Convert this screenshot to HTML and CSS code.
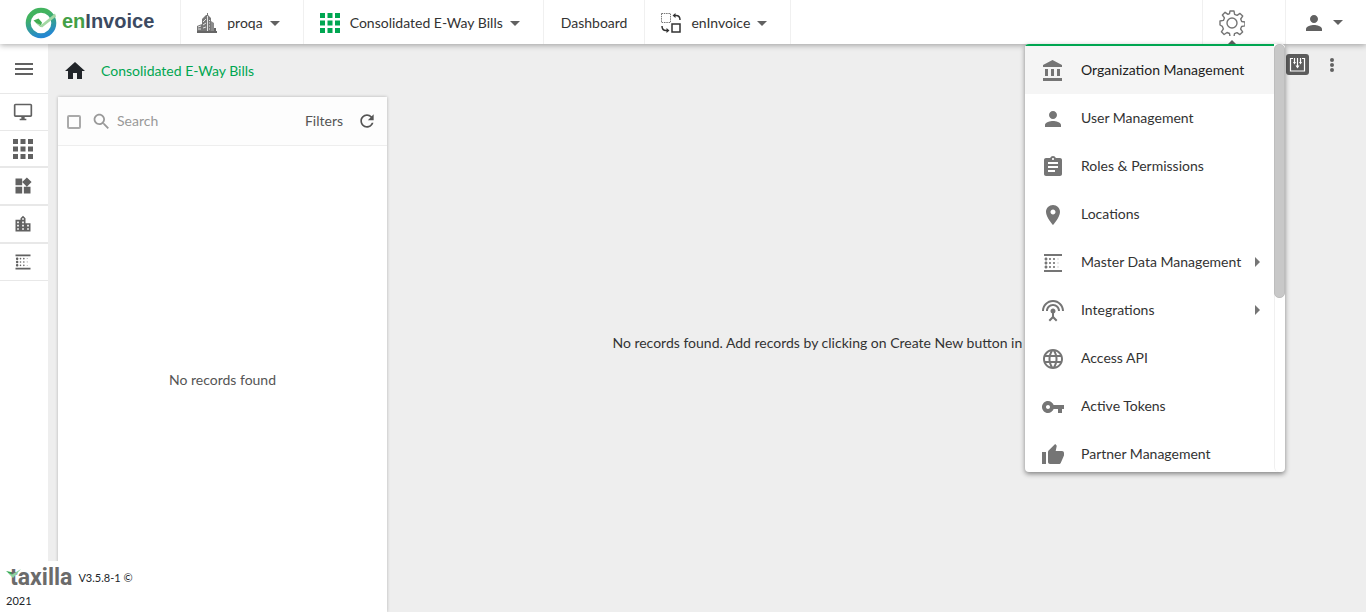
FILE: index.html
```html
<!DOCTYPE html>
<html lang="en">
<head>
<meta charset="utf-8">
<title>enInvoice - Consolidated E-Way Bills</title>
<link rel="stylesheet" href="styles.css">
</head>
<body>
<svg class="defs" aria-hidden="true">
  <symbol id="linear" viewBox="0 0 24 24"><path d="M5 17.500c.83 0 1.500-.67 1.500-1.500s-.67-1.500-1.500-1.500-1.500.67-1.500 1.500.67 1.500 1.500 1.500zM9 13c.55 0 1-.45 1-1s-.45-1-1-1-1 .45-1 1 .45 1 1 1zm0-4c.55 0 1-.45 1-1s-.45-1-1-1-1 .45-1 1 .45 1 1 1zM3 21h18v-2H3v2zM5 9.500c.83 0 1.500-.67 1.500-1.500S5.830 6.500 5 6.500 3.500 7.170 3.500 8 4.170 9.500 5 9.500zm0 4c.83 0 1.500-.67 1.500-1.500s-.67-1.500-1.500-1.500-1.500.67-1.500 1.500.67 1.500 1.500 1.500zM9 17c.55 0 1-.45 1-1s-.45-1-1-1-1 .45-1 1 .45 1 1 1zm8-.5c.28 0 .5-.22.5-.5s-.22-.5-.5-.5-.5.22-.5.5.22.5.5.5zM3 3v2h18V3H3zm14 5.500c.28 0 .5-.22.5-.5s-.22-.5-.5-.5-.5.22-.5.5.22.5.5.5zm0 4c.28 0 .5-.22.5-.5s-.22-.5-.5-.5-.5.22-.5.5.22.5.5.5zM13 9c.55 0 1-.45 1-1s-.45-1-1-1-1 .45-1 1 .45 1 1 1zm0 4c.55 0 1-.45 1-1s-.45-1-1-1-1 .45-1 1 .45 1 1 1zm0 4c.55 0 1-.45 1-1s-.45-1-1-1-1 .45-1 1 .45 1 1 1z"/></symbol>
  <symbol id="person" viewBox="0 0 24 24"><path d="M12 12c2.210 0 4-1.790 4-4s-1.790-4-4-4-4 1.790-4 4 1.790 4 4 4zm0 2c-2.670 0-8 1.340-8 4v2h16v-2c0-2.660-5.330-4-8-4z"/></symbol>
  <symbol id="grid" viewBox="0 0 20 20"><path d="M0 0h5v5H0zM7.500 0h5v5h-5zM15 0h5v5h-5zM0 7.500h5v5H0zM7.500 7.500h5v5h-5zM15 7.500h5v5h-5zM0 15h5v5H0zM7.500 15h5v5h-5zM15 15h5v5h-5z"/></symbol>
</svg>

<header class="topbar">
  <a class="brand" href="#">
    <svg class="brand-mark" viewBox="0 0 32 32" aria-hidden="true">
      <defs><linearGradient id="ring" x1="0.3" y1="0" x2="0.6" y2="1"><stop offset="0.2" stop-color="#42b35f"/><stop offset="1" stop-color="#2487d2"/></linearGradient></defs>
      <circle cx="16" cy="16" r="12.800" fill="none" stroke="url(#ring)" stroke-width="5"/>
      <path d="M8.500 13.500 13.500 11.500 17 15.500 15.500 20z" fill="#41ad52"/>
      <path d="M10 15.500 16 18 30 6.500 31 9.500 17 20.500z" fill="#a3d7a3"/>
    </svg>
    <span class="brand-name"><span class="brand-en">en</span>Invoice</span>
  </a>
  <button class="nav-item" type="button">
    <svg class="icon-20" viewBox="0 0 20 20" aria-hidden="true">
      <path fill="#777" d="M0 13l5-2v8H0zM5 6l4-4h1V0h1v2l3 3v14H5z"/>
      <path fill="#8b8b8b" d="M14 8l3 2v9h-3z"/>
      <path fill="#666" d="M0 18h20v2H0zM17 15h2v3h-2z"/>
      <path stroke="#fff" stroke-width=".8" fill="none" d="M6 9l3-3M6 12l3-2M6 15l3-1M10.500 3v15M12 7l1 1M12 10h1M12 13h1M12 16h1M1 14l3-1M1 16h3"/>
    </svg>
    <span>proqa</span><span class="caret"></span>
  </button>
  <button class="nav-item" type="button">
    <svg class="icon-20 green" aria-hidden="true"><use href="#grid"/></svg>
    <span>Consolidated E-Way Bills</span><span class="caret"></span>
  </button>
  <a class="nav-item nav-link" href="#">Dashboard</a>
  <button class="nav-item switcher" type="button">
    <svg class="icon-20" viewBox="0 0 20 20" aria-hidden="true">
      <path d="M.5.500h9v9h-9z" fill="none" stroke="#777" stroke-dasharray="1.500 .8"/>
      <path d="M11 11h8v8h-8z" fill="none" stroke="#333" stroke-width="1.500"/>
      <path d="M13 2.500h2q4 0 4 4.500M7 17.500H5q-4 0-4-4.500" fill="none" stroke="#333" stroke-width="1.500"/>
      <path d="M11.500 2.500 14.500 0v5zM8.500 17.500 5.500 15v5z" fill="#333"/>
    </svg>
    <span>enInvoice</span><span class="caret"></span>
  </button>
  <div class="nav-end">
    <div class="settings">
      <button class="gear" type="button" aria-label="Settings" aria-expanded="true">
        <svg viewBox="0 0 26 26" aria-hidden="true"><g fill="none" stroke="#757575" stroke-width="1.400" stroke-linejoin="round"><circle cx="13" cy="13" r="5"/><path d="M11 1h4l.6 3.400 2.500 1 2.900-2 2.700 2.700-2 2.900 1 2.500 3.300.5v3.900l-3.400.6-1 2.500 2 2.900-2.700 2.700-2.900-2-2.500 1-.5 3.300h-3.900l-.6-3.400-2.500-1-2.900 2-2.700-2.700 2-2.900-1-2.500L1 15v-4l3.400-.6 1-2.500-2-2.900L6.100 2.300l2.900 2 1.500-.6z"/></g></svg>
      </button>
      <span class="pointer"></span>
      <nav class="menu" aria-label="Settings">
        <div class="menu-list">
          <a class="menu-item active" href="#"><svg class="icon" viewBox="0 0 24 24"><path d="M4 10v7h3v-7H4zm6 0v7h3v-7h-3zM2 22h19v-3H2v3zm14-12v7h3v-7h-3zm-4.500-9L2 6v2h19V6l-9.500-5z"/></svg>Organization Management</a>
          <a class="menu-item" href="#"><svg class="icon"><use href="#person"/></svg>User Management</a>
          <a class="menu-item" href="#"><svg class="icon" viewBox="0 0 24 24"><path d="M19 3h-4.180C14.400 1.840 13.300 1 12 1c-1.300 0-2.400.84-2.820 2H5c-1.100 0-2 .9-2 2v14c0 1.100.9 2 2 2h14c1.100 0 2-.9 2-2V5c0-1.100-.9-2-2-2zm-7 0c.55 0 1 .45 1 1s-.45 1-1 1-1-.45-1-1 .45-1 1-1zm2 14H7v-2h7v2zm3-4H7v-2h10v2zm0-4H7V7h10v2z"/></svg>Roles &amp; Permissions</a>
          <a class="menu-item" href="#"><svg class="icon" viewBox="0 0 24 24"><path d="M12 2C8.130 2 5 5.130 5 9c0 5.250 7 13 7 13s7-7.750 7-13c0-3.870-3.130-7-7-7zm0 9.500c-1.380 0-2.500-1.120-2.500-2.500s1.120-2.500 2.500-2.500 2.500 1.120 2.500 2.500-1.120 2.500-2.500 2.500z"/></svg>Locations</a>
          <a class="menu-item" href="#"><svg class="icon"><use href="#linear"/></svg>Master Data Management<span class="sub"></span></a>
          <a class="menu-item" href="#"><svg class="icon" viewBox="0 0 24 24"><path d="M12 5c-3.870 0-7 3.130-7 7h2c0-2.760 2.240-5 5-5s5 2.240 5 5h2c0-3.870-3.130-7-7-7zm1 9.290c.88-.39 1.500-1.260 1.500-2.290 0-1.380-1.120-2.500-2.500-2.500S9.500 10.620 9.500 12c0 1.020.62 1.900 1.500 2.290v3.300L7.590 21 9 22.410l3-3 3 3L16.410 21 13 17.590v-3.300zM12 1C5.930 1 1 5.930 1 12h2c0-4.970 4.030-9 9-9s9 4.030 9 9h2c0-6.070-4.930-11-11-11z"/></svg>Integrations<span class="sub"></span></a>
          <a class="menu-item" href="#"><svg class="icon" viewBox="0 0 24 24"><path d="M11.990 2C6.470 2 2 6.480 2 12s4.470 10 9.990 10C17.520 22 22 17.520 22 12S17.520 2 11.990 2zm6.930 6h-2.950c-.32-1.250-.78-2.450-1.380-3.560 1.840.63 3.370 1.910 4.330 3.560zM12 4.040c.83 1.200 1.480 2.530 1.910 3.960h-3.820c.43-1.430 1.080-2.760 1.910-3.960zM4.260 14C4.100 13.360 4 12.690 4 12s.1-1.360.26-2h3.380c-.08.66-.14 1.320-.14 2s.06 1.340.14 2H4.260zm.82 2h2.950c.32 1.250.78 2.450 1.380 3.560-1.840-.63-3.370-1.900-4.330-3.560zm2.950-8H5.080c.96-1.660 2.490-2.930 4.330-3.560C8.810 5.550 8.350 6.750 8.030 8zM12 19.960c-.83-1.200-1.480-2.530-1.910-3.960h3.820c-.43 1.430-1.080 2.760-1.910 3.960zM14.340 14H9.660c-.09-.66-.16-1.320-.16-2s.07-1.350.16-2h4.680c.09.65.16 1.320.16 2s-.07 1.340-.16 2zm.25 5.560c.6-1.110 1.060-2.310 1.380-3.560h2.950c-.96 1.650-2.490 2.930-4.330 3.560zM16.360 14c.08-.66.14-1.320.14-2s-.06-1.340-.14-2h3.380c.16.64.26 1.310.26 2s-.1 1.360-.26 2h-3.380z"/></svg>Access API</a>
          <a class="menu-item" href="#"><svg class="icon" viewBox="0 0 24 24"><path d="M12.650 10C11.830 7.670 9.610 6 7 6c-3.310 0-6 2.690-6 6s2.690 6 6 6c2.610 0 4.830-1.670 5.650-4H17v4h4v-4h2v-4H12.650zM7 14c-1.100 0-2-.9-2-2s.9-2 2-2 2 .9 2 2-.9 2-2 2z"/></svg>Active Tokens</a>
          <a class="menu-item" href="#"><svg class="icon" viewBox="0 0 24 24"><path d="M1 21h4V9H1v12zm22-11c0-1.100-.9-2-2-2h-6.310l.95-4.570.03-.32c0-.41-.17-.79-.44-1.060L14.170 1 7.590 7.590C7.220 7.950 7 8.450 7 9v10c0 1.100.9 2 2 2h9c.83 0 1.540-.5 1.840-1.220l3.020-7.050c.09-.23.14-.47.14-.73v-2z"/></svg>Partner Management</a>
        </div>
        <div class="scroll-track"><div class="scroll-thumb"></div></div>
      </nav>
    </div>
    <button class="account" type="button" aria-label="Account"><svg class="icon"><use href="#person"/></svg><span class="caret"></span></button>
  </div>
</header>

<div class="shell">
  <aside class="rail">
    <button class="rail-item toggle" type="button" aria-label="Menu"><svg class="icon" viewBox="0 0 24 24"><path d="M3 18h18v-2H3v2zm0-5h18v-2H3v2zm0-7v2h18V6H3z"/></svg></button>
    <button class="rail-item" type="button" aria-label="Desktop"><svg class="rail-icon" viewBox="0 0 24 24"><path d="M21 2H3c-1.100 0-2 .9-2 2v12c0 1.100.9 2 2 2h7v2H8v2h8v-2h-2v-2h7c1.100 0 2-.9 2-2V4c0-1.100-.9-2-2-2zm0 14H3V4h18v12z"/></svg></button>
    <button class="rail-item thick" type="button" aria-label="Apps"><svg class="icon-20"><use href="#grid"/></svg></button>
    <button class="rail-item tall" type="button" aria-label="Widgets"><svg class="rail-icon" viewBox="0 0 24 24"><path d="M13 13v8h8v-8h-8zM3 21h8v-8H3v8zM3 3v8h8V3H3zm13.660-1.310L11 7.340 16.660 13l5.660-5.660-5.660-5.650z"/></svg></button>
    <button class="rail-item tall" type="button" aria-label="Organization"><svg class="rail-icon" viewBox="0 0 24 24"><path d="M15 11V5l-3-3-3 3v2H3v14h18V11h-6zm-8 8H5v-2h2v2zm0-4H5v-2h2v2zm0-4H5V9h2v2zm6 8h-2v-2h2v2zm0-4h-2v-2h2v2zm0-4h-2V9h2v2zm0-4h-2V5h2v2zm6 12h-2v-2h2v2zm0-4h-2v-2h2v2z"/></svg></button>
    <button class="rail-item" type="button" aria-label="Master data"><svg class="rail-icon"><use href="#linear"/></svg></button>
  </aside>

  <main class="page">
    <div class="crumbs">
      <a class="home" href="#" aria-label="Home"><svg class="home-icon" viewBox="0 0 24 24"><path d="M10 20v-6h4v6h5v-8h3L12 3 2 12h3v8z"/></svg></a>
      <a class="crumb" href="#">Consolidated E-Way Bills</a>
      <div class="tools">
        <button class="import" type="button" aria-label="Import"><svg viewBox="0 0 23 21"><rect width="23" height="21" rx="3" fill="#5c5c5c"/><path d="M4.500 4v13h14V4M8.500 4v5M11.500 4v9M14.500 4v5M5 4.500h2M16 4.500h2" fill="none" stroke="#fff" stroke-width="1.200"/><path d="M7 8h3l-1.500 2.500zM13 8h3l-1.500 2.500zM9.500 11.500h4l-2 3z" fill="#fff"/></svg></button>
        <button class="more" type="button" aria-label="More"><svg viewBox="0 0 6 16"><circle cx="3" cy="3" r="2"/><circle cx="3" cy="8" r="2"/><circle cx="3" cy="13" r="2"/></svg></button>
      </div>
    </div>
    <div class="content">
      <section class="records">
        <div class="records-head">
          <input class="check" type="checkbox" aria-label="Select all">
          <label class="search"><svg class="search-icon" viewBox="0 0 24 24"><path d="M15.500 14h-.79l-.28-.27C15.410 12.590 16 11.110 16 9.500 16 5.910 13.090 3 9.500 3S3 5.910 3 9.500 5.910 16 9.500 16c1.610 0 3.090-.59 4.230-1.570l.27.28v.79l5 4.990L20.490 19l-4.990-5zm-6 0C7.010 14 5 11.990 5 9.500S7.010 5 9.500 5 14 7.010 14 9.500 11.990 14 9.500 14z"/></svg><input class="search-input" type="text" placeholder="Search" aria-label="Search"></label>
          <button class="filters" type="button">Filters</button>
          <button class="refresh" type="button" aria-label="Refresh"><svg viewBox="0 0 24 24"><path d="M17.650 6.350C16.200 4.900 14.210 4 12 4c-4.420 0-7.990 3.580-7.990 8s3.570 8 7.990 8c3.730 0 6.840-2.550 7.730-6h-2.080c-.82 2.330-3.040 4-5.650 4-3.310 0-6-2.690-6-6s2.690-6 6-6c1.660 0 3.140.69 4.220 1.780L13 11h7V4l-2.350 2.350z"/></svg></button>
        </div>
        <p class="records-empty">No records found</p>
      </section>
      <section class="detail"><p>No records found. Add records by clicking on Create New button in the top right menu</p></section>
    </div>
  </main>

  <footer class="foot">
    <span class="taxilla">taxilla<svg class="leaf" viewBox="0 0 16 10" aria-hidden="true"><path d="M0 2l5 1 1 4z" fill="#2fa84f"/><path d="M2 4l4 1.500L15 0 7 9z" fill="#8fd3a0"/></svg></span>
    <span>V3.5.8-1 ©</span>
    <span class="year">2021</span>
  </footer>
</div>
</body>
</html>
```
FILE: styles.css
```css
* { box-sizing: border-box; }
body {
  margin: 0;
  height: 100vh;
  display: flex;
  flex-direction: column;
  overflow: hidden;
  background: #eee;
  color: #333;
  font: 14px/20px Lato, "Open Sans", sans-serif;
}
button { padding: 0; border: 0; background: none; color: inherit; font: inherit; }
a { color: inherit; text-decoration: none; }
p { margin: 0; }
svg { display: block; flex: none; }
.defs { position: absolute; width: 0; height: 0; }
.icon { width: 24px; height: 24px; fill: #757575; }
.icon-20 { width: 20px; height: 20px; fill: #616161; }
.icon-20.green { fill: #00a651; }
.caret { border: 5px solid transparent; border-top-color: #616161; border-bottom: 0; }

.topbar {
  position: relative;
  z-index: 2;
  display: flex;
  flex: none;
  height: 44px;
  background: #fff;
  box-shadow: 0 1px 6px rgba(0, 0, 0, 0.35);
}
.brand { display: flex; align-items: center; gap: 5px; padding: 2px 26px 0 25px; }
.brand-mark { width: 32px; height: 32px; }
.brand-name { font: bold 20px/24px "Liberation Sans", Arial, sans-serif; color: #3c4a61; padding-bottom: 4px; }
.brand-en { color: #43a047; }
.nav-item {
  display: flex;
  align-items: center;
  gap: 10px;
  padding: 2px 23px 0 16px;
  border-left: 1px solid #f0f0f0;
  white-space: nowrap;
}
.nav-item .caret { margin-left: -3px; }
.nav-link { padding: 2px 17px 0; }
.switcher { border-right: 1px solid #f0f0f0; }
.nav-end { display: flex; margin-left: auto; }
.settings { position: relative; width: 83px; border-left: 1px solid #f0f0f0; }
.gear { display: flex; align-items: center; padding-left: 16px; height: 100%; width: 100%; }
.gear svg { width: 26px; height: 26px; margin-top: 1px; }
.pointer { position: absolute; left: 25px; bottom: 0; border: 4px solid transparent; border-bottom-color: #616161; border-top: 0; }
.account { display: flex; align-items: center; gap: 7px; padding: 1px 23px 0 16px; border-left: 1px solid #f0f0f0; }
.account .icon { fill: #616161; }

.menu {
  position: absolute;
  top: 44px;
  right: 0;
  display: flex;
  width: 260px;
  height: 428px;
  overflow: hidden;
  border-radius: 4px;
  background: #fff;
  box-shadow: 0 2px 5px rgba(0, 0, 0, 0.45);
}
.menu-list { flex: 1; border-top: 2px solid #00a651; overflow: hidden; }
.menu-item { display: flex; align-items: center; height: 48px; padding: 0 14px 0 16px; color: #333; white-space: nowrap; }
.menu-item .icon { margin: 2px 16px 0 0; }
.menu-item.active { background: #f5f5f5; color: #212121; }
.sub { margin-left: auto; border: 5px solid transparent; border-left-color: #757575; border-right: 0; }
.scroll-track { width: 11px; border-left: 1px solid #f0f0f0; border-radius: 5px; }
.scroll-thumb { width: 11px; height: 254px; margin-left: -1px; border: 1px solid #bdbdbd; border-radius: 5px; background: #c8c8c8; }

.shell { position: relative; display: flex; flex: 1; min-height: 0; }
.rail { display: flex; flex-direction: column; width: 48px; background: #fff; }
.rail-item { display: flex; align-items: center; justify-content: center; height: 37px; padding-right: 2px; border-bottom: 1px solid #e8e8e8; }
.rail-item.toggle { height: 50px; padding-right: 0; }
.rail-item.thick, .rail-item.tall { border-bottom-width: 2px; }
.rail-item.tall { height: 38px; }
.rail-item .icon { fill: #616161; }
.rail-icon { width: 20px; height: 20px; fill: #616161; }

.page { display: flex; flex: 1; flex-direction: column; min-width: 0; padding-left: 10px; }
.crumbs { display: flex; align-items: center; height: 53px; padding: 0 31px 0 5px; }
.home-icon { width: 24px; height: 24px; fill: #212529; }
.crumb { margin-left: 14px; color: #00a651; }
.tools { display: flex; align-items: center; gap: 20px; margin: 0 0 12px auto; }
.import svg { width: 23px; height: 21px; }
.more svg { width: 6px; height: 16px; fill: #616161; }
.content { display: flex; flex: 1; min-height: 0; }
.records { display: flex; flex-direction: column; width: 329px; background: #fff; box-shadow: 0 0 3px rgba(0, 0, 0, 0.25); }
.records-head { display: flex; align-items: center; height: 49px; padding: 0 10px 0 9px; border-bottom: 1px solid #eee; background: #fdfdfd; }
.check { appearance: none; width: 14px; height: 14px; margin: 2px 0 0; border: 2px solid #aaa; border-radius: 2px; }
.search { display: flex; flex: 1; align-items: center; min-width: 0; margin-left: 10px; }
.search-icon { width: 21px; height: 21px; fill: #999; }
.search-input { width: 100px; margin-left: 5px; padding: 0; border: 0; background: none; color: #333; font: inherit; }
.search-input::placeholder { color: #999; }
.filters { color: #555; }
.refresh { margin-left: 14px; }
.refresh svg { width: 20px; height: 20px; fill: #555; }
.records-empty { margin: auto; padding-top: 2px; color: #555; }
.detail { display: flex; flex: 1; align-items: center; justify-content: center; padding-bottom: 24px; white-space: nowrap; }

.foot {
  position: absolute;
  bottom: 0;
  left: 0;
  display: flex;
  flex-wrap: wrap;
  align-items: center;
  width: 150px;
  height: 51px;
  padding: 4px 6px 0;
  background: #fff;
  column-gap: 6px;
  color: #212529;
  font-size: 11px;
}
.taxilla { position: relative; padding-left: 4px; color: #6b6b6b; font: bold 23px/24px Roboto, sans-serif; }
.leaf { position: absolute; left: 0; top: 3px; width: 16px; height: 10px; }
.year { width: 100%; }
```
